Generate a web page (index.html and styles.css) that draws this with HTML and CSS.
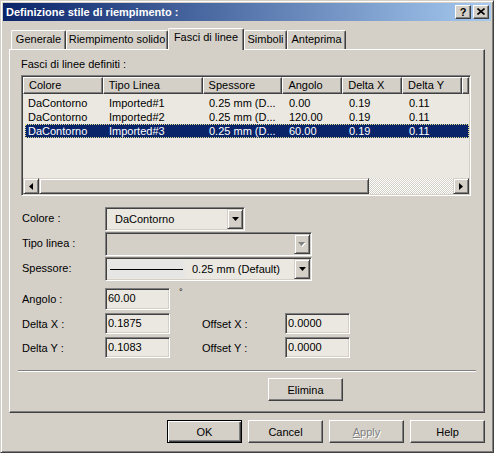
FILE: index.html
```html
<!DOCTYPE html>
<html lang="it">
<head>
    <meta charset="UTF-8">
    <title>Definizione stile di riempimento</title>
    <link rel="stylesheet" href="styles.css">
</head>
<body>
    <div class="window">
        <div class="titlebar">
            <span class="title">Definizione stile di riempimento :</span>
            <div class="caption-btns">
                <span class="cap-btn help">?</span>
                <span class="cap-btn">
                    <svg width="8" height="7" viewBox="0 0 8 7"><path d="M0.5 0.5L7.5 6.5M7.5 0.5L0.5 6.5" stroke="#000" stroke-width="1.6"/></svg>
                </span>
            </div>
        </div>

        <div class="client">
            <div class="tabs">
                <div class="tab tab-generale">Generale</div>
                <div class="tab tab-riemp">Riempimento solido</div>
                <div class="tab tab-fasci active">Fasci di linee</div>
                <div class="tab tab-simboli">Simboli</div>
                <div class="tab tab-anteprima">Anteprima</div>
            </div>

            <div class="panel">
                <div class="group-label">Fasci di linee definiti :</div>

                <div class="listview">
                    <div class="lv-header">
                        <div class="hcell c1">Colore</div>
                        <div class="hcell c2">Tipo Linea</div>
                        <div class="hcell c3">Spessore</div>
                        <div class="hcell c4">Angolo</div>
                        <div class="hcell c5">Delta X</div>
                        <div class="hcell c6">Delta Y</div>
                        <div class="hcell filler"></div>
                    </div>
                    <div class="lv-rows">
                        <div class="lv-row">
                            <div class="cell c1">DaContorno</div>
                            <div class="cell c2">Imported#1</div>
                            <div class="cell c3">0.25 mm (D...</div>
                            <div class="cell c4">0.00</div>
                            <div class="cell c5">0.19</div>
                            <div class="cell c6">0.11</div>
                        </div>
                        <div class="lv-row">
                            <div class="cell c1">DaContorno</div>
                            <div class="cell c2">Imported#2</div>
                            <div class="cell c3">0.25 mm (D...</div>
                            <div class="cell c4">120.00</div>
                            <div class="cell c5">0.19</div>
                            <div class="cell c6">0.11</div>
                        </div>
                        <div class="lv-row selected">
                            <div class="cell c1">DaContorno</div>
                            <div class="cell c2">Imported#3</div>
                            <div class="cell c3">0.25 mm (D...</div>
                            <div class="cell c4">60.00</div>
                            <div class="cell c5">0.19</div>
                            <div class="cell c6">0.11</div>
                        </div>
                    </div>
                    <div class="hscroll">
                        <div class="sb-btn">
                            <svg width="4" height="7" viewBox="0 0 4 7"><path d="M0 3.5L4 0V7Z" fill="#000"/></svg>
                        </div>
                        <div class="sb-track"><div class="sb-thumb"></div></div>
                        <div class="sb-btn">
                            <svg width="4" height="7" viewBox="0 0 4 7"><path d="M4 3.5L0 0V7Z" fill="#000"/></svg>
                        </div>
                    </div>
                </div>

                <div class="combos">
                    <div class="frow">
                        <label class="flabel">Colore :</label>
                        <div class="combo combo-short">
                            <div class="combo-text">DaContorno</div>
                            <div class="combo-btn">
                                <svg width="7" height="4" viewBox="0 0 7 4"><path d="M0 0H7L3.5 4Z" fill="#000"/></svg>
                            </div>
                        </div>
                    </div>
                    <div class="frow">
                        <label class="flabel">Tipo linea :</label>
                        <div class="combo combo-long disabled">
                            <div class="combo-text"></div>
                            <div class="combo-btn">
                                <svg width="8" height="5" viewBox="0 0 8 5"><path d="M1 1H8L4.5 5Z" fill="#fff"/><path d="M0 0H7L3.5 4Z" fill="#808080"/></svg>
                            </div>
                        </div>
                    </div>
                    <div class="frow">
                        <label class="flabel">Spessore:</label>
                        <div class="combo combo-long">
                            <div class="combo-text">
                                <span class="line-preview"><span class="line"></span></span>
                                <span>0.25 mm (Default)</span>
                            </div>
                            <div class="combo-btn">
                                <svg width="7" height="4" viewBox="0 0 7 4"><path d="M0 0H7L3.5 4Z" fill="#000"/></svg>
                            </div>
                        </div>
                    </div>
                </div>

                <div class="fields">
                    <label class="flabel">Angolo :</label>
                    <div class="textbox">60.00</div>
                    <div class="degree">°</div>
                    <div></div>
                    <div></div>

                    <label class="flabel">Delta X :</label>
                    <div class="textbox">0.1875</div>
                    <div></div>
                    <label class="flabel">Offset X :</label>
                    <div class="textbox">0.0000</div>

                    <label class="flabel">Delta Y :</label>
                    <div class="textbox">0.1083</div>
                    <div></div>
                    <label class="flabel">Offset Y :</label>
                    <div class="textbox">0.0000</div>
                </div>

                <div class="separator"></div>

                <button class="btn btn-elimina">Elimina</button>
            </div>

            <div class="actions">
                <button class="btn default">OK</button>
                <button class="btn">Cancel</button>
                <button class="btn disabled"><u>A</u>pply</button>
                <button class="btn">Help</button>
            </div>
        </div>
    </div>
</body>
</html>
```

FILE: styles.css
```css
* {
    margin: 0;
    padding: 0;
    box-sizing: border-box;
}

body {
    background: #d4d0c8;
    font-family: "Liberation Sans", Arial, sans-serif;
    font-size: 11px;
    color: #000;
}

/* finestra */
.window {
    width: 494px;
    height: 453px;
    background: #d4d0c8;
    border: 1px solid;
    border-color: #d4d0c8 #404040 #404040 #d4d0c8;
    box-shadow: inset 1px 1px #fff, inset -1px -1px #808080;
    padding: 2px;
}

.titlebar {
    height: 18px;
    display: flex;
    align-items: center;
    padding: 0 2px 0 2px;
    background: linear-gradient(to right, #0a246a, #a6caf0);
}

.title {
    color: #fff;
    font-weight: bold;
    font-size: 11px;
    padding-left: 1px;
    padding-bottom: 1px;
}

.caption-btns {
    margin-left: auto;
    display: flex;
    gap: 2px;
}

.cap-btn {
    width: 16px;
    height: 14px;
    display: flex;
    align-items: center;
    justify-content: center;
    background: #d4d0c8;
    border: 1px solid;
    border-color: #fff #404040 #404040 #fff;
    box-shadow: inset -1px -1px #808080;
    font-weight: bold;
    font-size: 11px;
    line-height: 12px;
}

.cap-btn svg {
    margin-top: -1px;
}

.client {
    padding: 7px 0 0 6px;
}

/* schede */
.tabs {
    display: flex;
    align-items: flex-start;
    height: 21px;
    padding-left: 2px;
    position: relative;
    z-index: 2;
}

.tab {
    height: 19px;
    margin-top: 2px;
    text-align: center;
    line-height: 17px;
    background: #d4d0c8;
    border-top: 1px solid #fff;
    border-left: 1px solid #fff;
    border-right: 1px solid #404040;
    box-shadow: inset -1px 0 #808080;
    border-radius: 2px 2px 0 0;
    white-space: nowrap;
}

.tab.active {
    height: 22px;
    margin-top: 0;
}

.tab-generale { width: 55px; }
.tab-riemp { width: 102px; }
.tab-fasci { width: 76px; }
.tab-simboli { width: 43px; }
.tab-anteprima { width: 59px; }

.panel {
    width: 476px;
    height: 364px;
    border: 1px solid;
    border-color: #fff #404040 #404040 #fff;
    box-shadow: inset -1px -1px #808080;
    padding: 8px 0 0 11px;
}

.group-label {
    line-height: 13px;
}

/* lista */
.listview {
    width: 450px;
    height: 121px;
    margin-top: 4px;
    border: 1px solid;
    border-color: #808080 #fff #fff #808080;
    box-shadow: inset 1px 1px #404040, inset -1px -1px #d4d0c8;
    padding: 1px;
    background: #eae8e1;
    display: flex;
    flex-direction: column;
}

.lv-header {
    display: flex;
    height: 17px;
}

.hcell {
    height: 17px;
    background: #d4d0c8;
    border: 1px solid;
    border-color: #fff #404040 #404040 #fff;
    box-shadow: inset -1px -1px #808080;
    padding-left: 5px;
    line-height: 14px;
    white-space: nowrap;
    overflow: hidden;
}

.c1 { width: 80px; }
.c2 { width: 100px; }
.c3 { width: 80px; }
.c4 { width: 60px; }
.c5 { width: 60px; }
.c6 { width: 60px; }
.filler { flex: 1; }

.lv-rows {
    flex: 1;
    padding-top: 2px;
}

.lv-row {
    display: flex;
    height: 14px;
    line-height: 14px;
    position: relative;
}

.cell {
    padding-left: 6px;
    white-space: nowrap;
}

.cell.c1 {
    padding-left: 5px;
}

.lv-row.selected {
    color: #fff;
    background: linear-gradient(#0a246a, #0a246a) 2px 0 / calc(100% - 2px) 100% no-repeat;
}

.lv-row.selected::after {
    content: "";
    position: absolute;
    top: 0;
    bottom: 0;
    left: 2px;
    right: 0;
    border: 1px dotted #e8e08a;
}

.hscroll {
    display: flex;
    height: 16px;
}

.sb-btn {
    width: 16px;
    height: 16px;
    display: flex;
    align-items: center;
    justify-content: center;
    background: #d4d0c8;
    border: 1px solid;
    border-color: #d4d0c8 #404040 #404040 #d4d0c8;
    box-shadow: inset 1px 1px #fff, inset -1px -1px #808080;
}

.sb-track {
    flex: 1;
    background: repeating-conic-gradient(#fff 0 25%, #d4d0c8 0 50%) 0 0 / 2px 2px;
}

.sb-thumb {
    width: 330px;
    height: 16px;
    background: #d4d0c8;
    border: 1px solid;
    border-color: #d4d0c8 #404040 #404040 #d4d0c8;
    box-shadow: inset 1px 1px #fff, inset -1px -1px #808080;
}

/* campi */
.combos {
    margin-top: 11px;
    display: flex;
    flex-direction: column;
    gap: 1px;
}

.frow {
    display: flex;
    align-items: center;
    height: 24px;
}

.flabel {
    width: 84px;
    padding-left: 1px;
    padding-bottom: 2px;
    white-space: nowrap;
}

.combo {
    height: 24px;
    display: flex;
    border: 1px solid;
    border-color: #808080 #fff #fff #808080;
    box-shadow: inset 1px 1px #404040, inset -1px -1px #d4d0c8;
    padding: 1px;
    background: #eae8e1;
}

.combo-short { width: 140px; }
.combo-long { width: 207px; }

.combo.disabled {
    background: #d4d0c8;
}

.combo-text {
    flex: 1;
    display: flex;
    align-items: center;
    padding-left: 8px;
    white-space: nowrap;
}

.combo-long .combo-text {
    padding-left: 1px;
}

.line-preview {
    width: 77px;
    height: 18px;
    display: flex;
    align-items: center;
    padding-left: 2px;
    background: #e6e6e4;
    margin-right: 7px;
}

.line {
    display: block;
    width: 73px;
    height: 1px;
    background: #000;
}

.combo-btn {
    width: 16px;
    display: flex;
    align-items: center;
    justify-content: center;
    background: #d4d0c8;
    border: 1px solid;
    border-color: #d4d0c8 #404040 #404040 #d4d0c8;
    box-shadow: inset 1px 1px #fff, inset -1px -1px #808080;
}

.fields {
    margin-top: 7px;
    display: grid;
    grid-template-columns: 84px 65px 31px 84px 65px;
    grid-template-rows: 22px 21px 21px;
    row-gap: 3px;
    align-items: center;
}

.fields .flabel {
    padding-bottom: 0;
}

.textbox {
    height: 100%;
    border: 1px solid;
    border-color: #808080 #fff #fff #808080;
    box-shadow: inset 1px 1px #404040, inset -1px -1px #d4d0c8;
    background: #eae8e1;
    padding: 1px 0 0 2px;
    line-height: 16px;
}

.degree {
    align-self: start;
    padding-left: 9px;
    font-size: 9px;
    line-height: 9px;
}

.separator {
    width: 458px;
    margin: 12px 0 0 -3px;
    border-top: 1px solid #808080;
    border-bottom: 1px solid #fff;
}

/* pulsanti */
.btn {
    display: block;
    width: 75px;
    height: 23px;
    font-family: "Liberation Sans", Arial, sans-serif;
    font-size: 11px;
    color: #000;
    background: #d4d0c8;
    border: 1px solid;
    border-color: #fff #404040 #404040 #fff;
    box-shadow: inset -1px -1px #808080;
}

.btn u {
    text-decoration: underline;
}

.btn.default {
    border-color: #000;
    box-shadow: inset 1px 1px #fff, inset -1px -1px #404040, inset -2px -2px #808080;
}

.btn.disabled {
    color: #808080;
    text-shadow: 1px 1px #fff;
}

.btn-elimina {
    margin: 6px 0 0 247px;
}

.actions {
    width: 476px;
    margin-top: 7px;
    display: flex;
    justify-content: flex-end;
    gap: 6px;
}
```
